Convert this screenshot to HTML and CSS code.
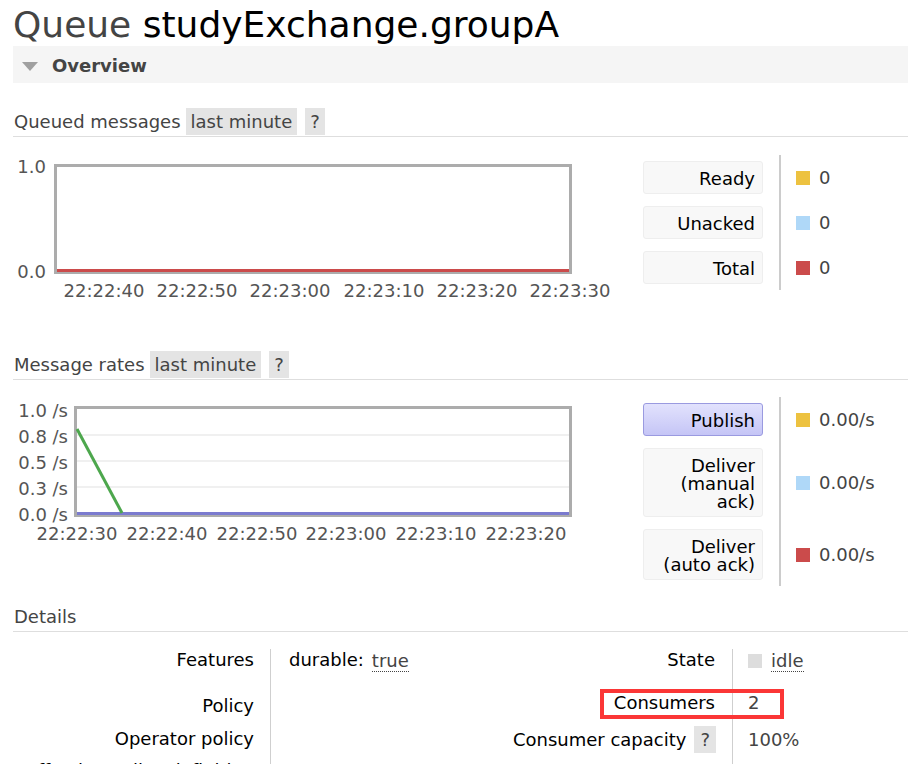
FILE: index.html
```html
<!DOCTYPE html>
<html>
<head>
<meta charset="utf-8">
<link rel="stylesheet" href="styles.css">
</head>
<body>
<div class="page">
  <h1 class="title"><span class="kind">Queue</span> <span class="name">studyExchange.groupA</span></h1>
  <div class="section-bar"><span class="tri"></span><span class="bar-text">Overview</span></div>

  <div class="hdr hdr-queued"><span class="hdr-title">Queued messages</span><span class="tag">last minute</span><span class="tag">?</span></div>
  <div class="chart-row row-queued">
    <svg class="chart" width="630" height="150" viewBox="0 0 630 150">
      <rect x="42.5" y="10.5" width="515" height="107" fill="#fff" stroke="#acacac" stroke-width="3"/>
      <line x1="44" y1="115.5" x2="556" y2="115.5" stroke="#cb4b4b" stroke-width="3"/>
      <g class="ylab" text-anchor="end">
        <text x="33" y="18">1.0</text>
        <text x="33" y="123">0.0</text>
      </g>
      <g class="xlab" text-anchor="middle">
        <text x="91" y="142">22:22:40</text>
        <text x="184" y="142">22:22:50</text>
        <text x="277" y="142">22:23:00</text>
        <text x="371" y="142">22:23:10</text>
        <text x="464" y="142">22:23:20</text>
        <text x="557" y="142">22:23:30</text>
      </g>
    </svg>
    <div class="legend">
      <div class="lg-row"><div class="lg-th"><span class="btn">Ready</span></div><div class="lg-td"><span class="sw sw-yellow"></span>0</div></div>
      <div class="lg-row"><div class="lg-th"><span class="btn">Unacked</span></div><div class="lg-td"><span class="sw sw-blue"></span>0</div></div>
      <div class="lg-row"><div class="lg-th"><span class="btn">Total</span></div><div class="lg-td"><span class="sw sw-red"></span>0</div></div>
    </div>
  </div>

  <div class="hdr hdr-rates"><span class="hdr-title">Message rates</span><span class="tag">last minute</span><span class="tag">?</span></div>
  <div class="chart-row row-rates">
    <svg class="chart" width="630" height="150" viewBox="0 0 630 150">
      <rect x="62.5" y="10.5" width="495" height="108" fill="#fff" stroke="#acacac" stroke-width="3"/>
      <g stroke="#ebebeb" stroke-width="1.5">
        <line x1="64" y1="38" x2="556" y2="38"/>
        <line x1="64" y1="64" x2="556" y2="64"/>
        <line x1="64" y1="90" x2="556" y2="90"/>
      </g>
      <line x1="64" y1="116.5" x2="556" y2="116.5" stroke="#7b7bcf" stroke-width="3"/>
      <line x1="64" y1="32" x2="109" y2="116" stroke="#4da74d" stroke-width="3"/>
      <g class="ylab" text-anchor="end">
        <text x="55" y="19.5">1.0 /s</text>
        <text x="55" y="45.5">0.8 /s</text>
        <text x="55" y="71.5">0.5 /s</text>
        <text x="55" y="97.5">0.3 /s</text>
        <text x="55" y="123.5">0.0 /s</text>
      </g>
      <g class="xlab" text-anchor="middle">
        <text x="64" y="143">22:22:30</text>
        <text x="154" y="143">22:22:40</text>
        <text x="244" y="143">22:22:50</text>
        <text x="333" y="143">22:23:00</text>
        <text x="423" y="143">22:23:10</text>
        <text x="513" y="143">22:23:20</text>
      </g>
    </svg>
    <div class="legend">
      <div class="lg-row"><div class="lg-th"><span class="btn btn-on">Publish</span></div><div class="lg-td"><span class="sw sw-yellow"></span>0.00/s</div></div>
      <div class="lg-row"><div class="lg-th"><span class="btn">Deliver<br>(manual<br>ack)</span></div><div class="lg-td"><span class="sw sw-blue"></span>0.00/s</div></div>
      <div class="lg-row"><div class="lg-th"><span class="btn">Deliver<br>(auto ack)</span></div><div class="lg-td"><span class="sw sw-red"></span>0.00/s</div></div>
    </div>
  </div>

  <div class="hdr hdr-details"><span class="hdr-title">Details</span></div>
  <div class="details">
    <div class="dtable dleft">
      <div class="th">Features</div><div class="td"><span class="key">durable:</span> <abbr class="dot">true</abbr></div>
      <div class="th">Policy</div><div class="td"></div>
      <div class="th">Operator policy</div><div class="td"></div>
      <div class="th">Effective policy definition</div><div class="td"></div>
    </div>
    <div class="dtable dright">
      <div class="th">State</div><div class="td"><span class="idle-sq"></span><abbr class="dot">idle</abbr></div>
      <div class="th">Consumers</div><div class="td">2</div>
      <div class="th">Consumer capacity <span class="tag tag-q">?</span></div><div class="td">100%</div>
      <div class="th">Message body bytes</div><div class="td"></div>
    </div>
    <div class="redbox"></div>
  </div>
</div>
</body>
</html>
```

FILE: styles.css
```css
html, body {
  margin: 0;
  padding: 0;
  height: 764px;
  overflow: hidden;
  background: #fff;
}
body {
  font-family: "DejaVu Sans", Verdana, sans-serif;
  font-size: 18px;
  color: #444;
}
.page {
  padding-left: 13px;
}
.title {
  margin: 0;
  padding-top: 4px;
  font-size: 36px;
  line-height: 42px;
  font-weight: normal;
  white-space: nowrap;
}
.title .kind { color: #444; }
.title .name { color: #000; }

.section-bar {
  box-sizing: border-box;
  height: 37px;
  padding-top: 2px;
  background: #f5f5f5;
  display: flex;
  align-items: center;
}
.tri {
  width: 0;
  height: 0;
  border-left: 8px solid transparent;
  border-right: 8px solid transparent;
  border-top: 9px solid #a0a0a0;
  margin-left: 9px;
  margin-right: 14px;
  margin-top: 1px;
}
.bar-text {
  font-weight: bold;
  color: #444;
}

.hdr {
  display: flex;
  align-items: flex-end;
  border-bottom: 1px solid #dedede;
  padding-bottom: 1px;
  line-height: 27px;
}
.hdr-title { padding-left: 1px; margin-right: 5px; }
.hdr-queued { margin-top: 25px; }
.hdr-rates { margin-top: 46px; }
.hdr-details { margin-top: 17px; }
.tag {
  background: #e4e4e4;
  padding: 0 5px;
  margin-right: 8px;
  line-height: 27px;
  color: #444;
}

.chart-row {
  display: flex;
  align-items: flex-start;
}
.row-queued { margin-top: 18px; }
.row-rates { margin-top: 17px; }
.chart { display: block; flex: none; }
.chart text {
  font-family: "DejaVu Sans", Verdana, sans-serif;
  font-size: 18px;
  fill: #555;
}

.legend { display: flex; flex-direction: column; }
.lg-row { display: flex; }
.lg-th { padding: 6px 16px 6px 0; }
.lg-td {
  border-left: 2px solid #cccccc;
  padding-left: 15px;
  display: flex;
  align-items: center;
  color: #444;
}
.btn {
  display: block;
  box-sizing: border-box;
  width: 120px;
  padding: 8px 7px 5px 0;
  line-height: 18px;
  text-align: right;
  color: #000;
  background: #f8f8f8;
  border: 1px solid #eeeeee;
  border-radius: 3px;
}
.btn-on {
  background: linear-gradient(#e2e2fd, #c5c5f6);
  border-color: #9a9ae0;
}
.sw {
  width: 14px;
  height: 14px;
  margin-right: 9px;
}
.sw-yellow { background: #edc240; }
.sw-blue { background: #afd8f8; }
.sw-red { background: #cb4b4b; }

.details {
  position: relative;
  display: flex;
  margin-top: 17px;
}
.dtable {
  display: grid;
  line-height: 22px;
}
.dleft {
  grid-template-columns: 257px 200px;
  grid-template-rows: 46px 33px 32px 33px;
}
.dright {
  grid-template-columns: 262px 150px;
  grid-template-rows: 43px 37px 36px 33px;
}
.dtable .th {
  padding-right: 16px;
  color: #000;
  white-space: nowrap;
  display: flex;
  justify-content: flex-end;
  align-items: flex-start;
}
.dtable .td {
  border-left: 1px solid #cfcfcf;
  padding-left: 18px;
  color: #444;
  display: flex;
  align-items: flex-start;
}
.dright .td { padding-left: 15px; }
.dright .th { padding-right: 17px; }
.key { color: #000; margin-right: 8px; }
.dot {
  text-decoration: none;
  border-bottom: 1px dotted #444;
  line-height: 20px;
  margin-top: 2px;
}
.idle-sq {
  width: 14px;
  height: 14px;
  background: #dddddd;
  margin-top: 5px;
  margin-right: 9px;
}
.tag-q {
  margin-left: 8px;
  margin-right: -1px;
  margin-top: -3px;
  padding: 0 6px;
}
.redbox {
  position: absolute;
  left: 587px;
  top: 40px;
  width: 184px;
  height: 30px;
  box-sizing: border-box;
  border: 4px solid #fb3636;
}
```
